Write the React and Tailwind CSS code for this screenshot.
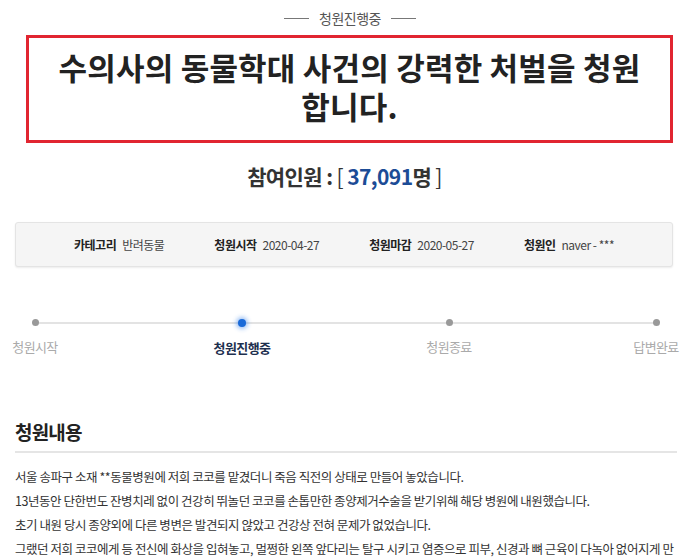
const steps = [
  { label: '청원시작', active: false },
  { label: '청원진행중', active: true },
  { label: '청원종료', active: false },
  { label: '답변완료', active: false },
];

const infoItems = [
  { name: '카테고리', value: '반려동물' },
  { name: '청원시작', value: '2020-04-27' },
  { name: '청원마감', value: '2020-05-27' },
  { name: '청원인', value: 'naver - ***' },
];

const lines = [
  '서울 송파구 소재 **동물병원에 저희 코코를 맡겼더니 죽음 직전의 상태로 만들어 놓았습니다.',
  '13년동안 단한번도 잔병치레 없이 건강히 뛰놀던 코코를 손톱만한 종양제거수술을 받기위해 해당 병원에 내원했습니다.',
  '초기 내원 당시 종양외에 다른 병변은 발견되지 않았고 건강상 전혀 문제가 없었습니다.',
  '그랬던 저희 코코에게 등 전신에 화상을 입혀놓고, 멀쩡한 왼쪽 앞다리는 탈구 시키고 염증으로 피부, 신경과 뼈 근육이 다녹아 없어지게 만',
];

export default function App() {
  return (
    <div className="w-[700px] h-[560px] overflow-hidden bg-white text-[#333] font-['Noto_Sans_CJK_KR',sans-serif]">
      {/* status */}
      <div className="flex items-center justify-center gap-[10px] pt-[6px] h-[30px]">
        <span className="w-[25px] h-px bg-[#777]" />
        <span className="text-[14px] text-[#555] tracking-[-0.5px]">청원진행중</span>
        <span className="w-[25px] h-px bg-[#777]" />
      </div>

      {/* title */}
      <div className="ml-[26px] mt-[5px] w-[647px] h-[108px] pb-[7px] border-[3px] border-[#e12531] flex flex-col items-center justify-center text-center text-[31px] font-bold leading-[39px] text-[#222] tracking-[0.2px]">
        <h1>수의사의 동물학대 사건의 강력한 처벌을 청원</h1>
        <p>합니다.</p>
      </div>

      {/* count */}
      <div className="mt-[19px] mr-[11px] text-center text-[21px] font-bold text-[#333] tracking-[-0.6px] leading-[28px]">
        참여인원 : <span className="font-normal">[</span> <span className="text-[#1c4c96]">37,091</span>명 <span className="font-normal">]</span>
      </div>

      {/* info */}
      <div className="ml-[15px] mt-[32px] w-[658px] h-[45px] bg-[#f5f5f5] border border-[#e4e4e4] rounded-[3px] shadow-[0_1px_2px_rgba(0,0,0,0.08)] flex items-center justify-center gap-[50px] text-[12px] tracking-[-0.5px]">
        {infoItems.map((it) => (
          <div key={it.name} className="flex items-center gap-[6px]">
            <span className="font-bold text-[#222]">{it.name}</span>
            <span className="text-[#444]">{it.value}</span>
          </div>
        ))}
      </div>

      {/* stepper */}
      <div className="relative ml-[35px] mt-[52px] w-[621px]">
        <div className="absolute left-0 right-0 top-[3px] h-[2px] bg-[#e3e3e3]" />
        <div className="relative flex justify-between">
          {steps.map((s) => (
            <div key={s.label} className="w-0 flex flex-col items-center">
              {s.active ? (
                <span className="w-[8px] h-[8px] rounded-full bg-[#1a6ad8] shadow-[0_0_4px_2px_rgba(40,120,230,0.45)]" />
              ) : (
                <span className="w-[7px] h-[7px] rounded-full bg-[#999]" />
              )}
              <span
                className={
                  s.active
                    ? 'mt-[11px] whitespace-nowrap text-[13px] font-bold text-[#1d2f4e] tracking-[-0.6px]'
                    : 'mt-[11px] whitespace-nowrap text-[13px] text-[#aaa] tracking-[-0.6px]'
                }
              >
                {s.label}
              </span>
            </div>
          ))}
        </div>
      </div>

      {/* content */}
      <div className="ml-[15px] mr-[23px] mt-[60px]">
        <h2 className="text-[19px] font-bold text-[#222] tracking-[-0.8px] leading-[28px] pb-[5px] border-b-2 border-[#e5e5e5]">
          청원내용
        </h2>
        <div className="mt-[12px] text-[12.5px] text-[#333] leading-[24px] tracking-[-0.45px]">
          {lines.map((l) => (
            <p key={l} className="whitespace-nowrap">{l}</p>
          ))}
        </div>
      </div>
    </div>
  );
}
